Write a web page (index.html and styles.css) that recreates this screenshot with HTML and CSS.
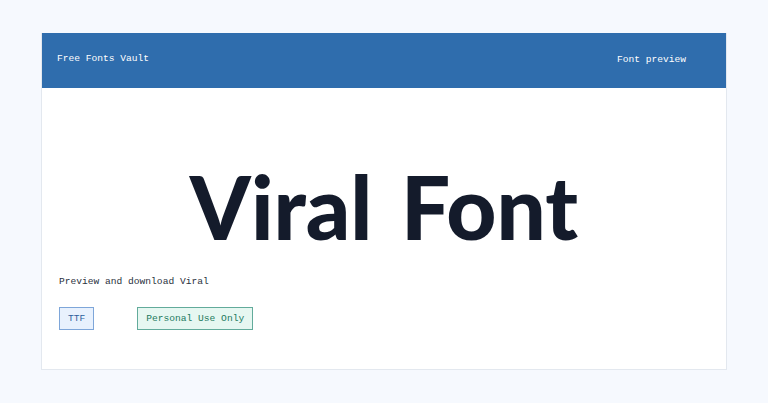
FILE: index.html
```html
<!DOCTYPE html>
<html lang="en">
<head>
    <meta charset="UTF-8">
    <meta name="viewport" content="width=device-width, initial-scale=1.0">
    <title>Viral Font - Free Fonts Vault</title>
    <link rel="stylesheet" href="styles.css">
</head>
<body>
    <div class="card">
        <header class="top-bar">
            <span class="site-name">Free Fonts Vault</span>
            <span class="page-name">Font preview</span>
        </header>
        <main class="preview">
            <h1 class="sample">Viral Font</h1>
            <p class="lead">Preview and download Viral</p>
            <div class="tags">
                <span class="tag format">TTF</span>
                <span class="tag license">Personal Use Only</span>
            </div>
        </main>
    </div>
</body>
</html>
```

FILE: styles.css
```css
body {
    margin: 0;
    padding: 33px 41px;
    background: #f6f9fe;
    font-family: "Liberation Mono", "DejaVu Sans Mono", monospace;
    font-size: 9.6px;
}

.card {
    background: #ffffff;
    border: 1px solid #e3e8ef;
    border-top: none;
    height: 337px;
    box-sizing: border-box;
}

.top-bar {
    display: flex;
    justify-content: space-between;
    align-items: center;
    height: 55px;
    padding: 0 40px 0 15px;
    background: #2f6dad;
    color: #ffffff;
}

.site-name {
    margin-top: -4px;
}

.page-name {
    margin-top: -2px;
}

.preview {
    padding: 0 17px;
}

.sample {
    margin: 75px 0 0;
    text-align: center;
    font-family: Lato, Inter, sans-serif;
    font-weight: 900;
    font-size: 87px;
    line-height: 87px;
    word-spacing: 8px;
    color: #141b2b;
}

.lead {
    margin: 26px 0 0;
    color: #2a3140;
}

.tags {
    display: flex;
    gap: 43px;
    margin-top: 20px;
}

.tag {
    padding: 5px 8px;
    border: 1px solid;
}

.format {
    background: #e8f1fd;
    border-color: #7ea6d9;
    color: #2e5f9c;
}

.license {
    background: #e6f7f1;
    border-color: #62ab9b;
    color: #1c7a5d;
}
```
